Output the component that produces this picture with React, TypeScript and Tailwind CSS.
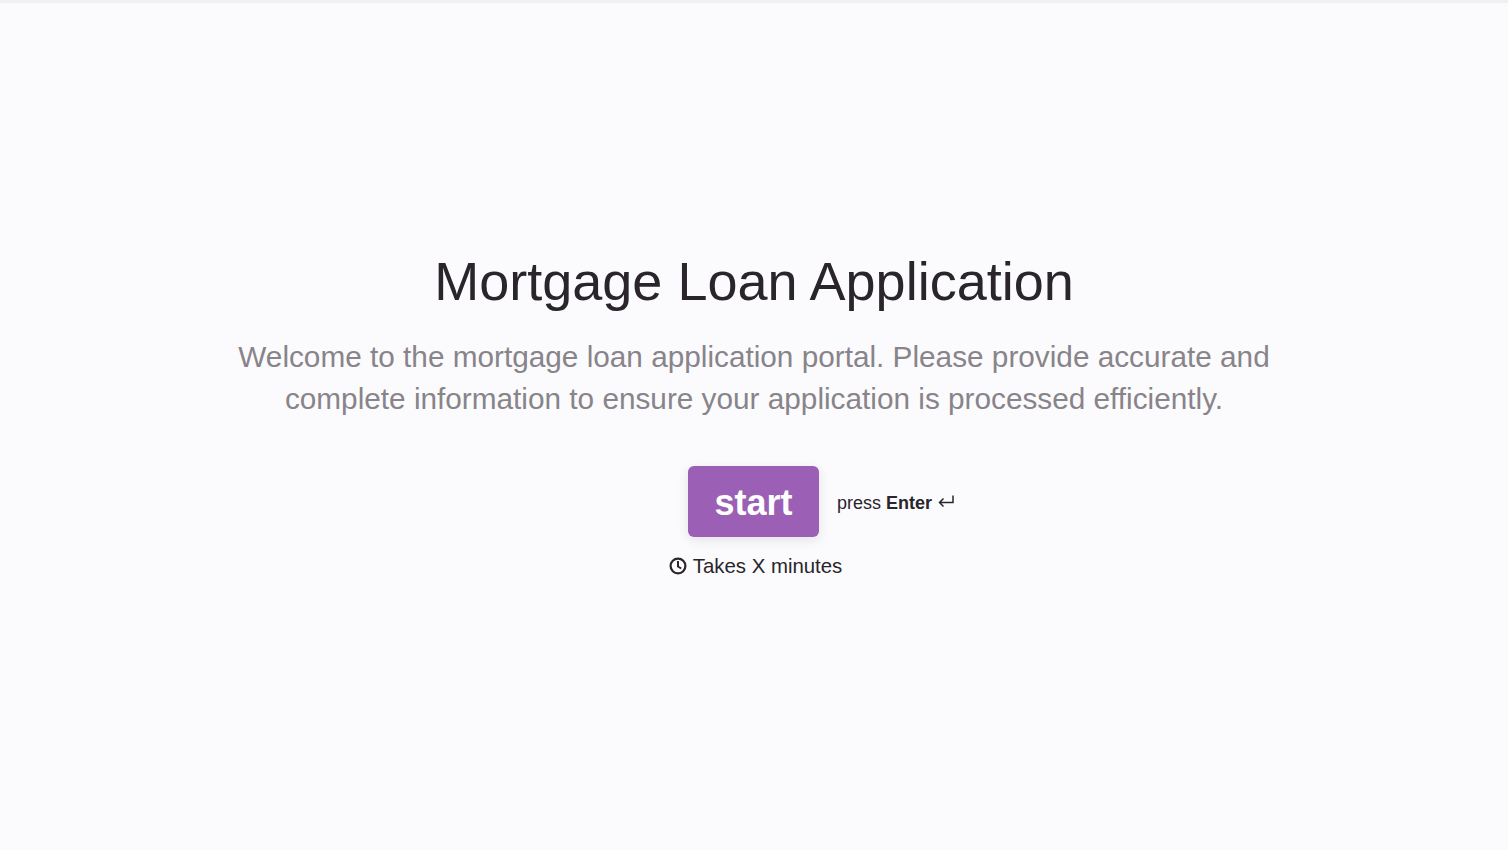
export default function App() {
  return (
    <div className="h-[850px] bg-[#fbfbfd] border-t-[3px] border-[#f0f0f3] flex flex-col items-center justify-center font-['Liberation_Sans',Arial,sans-serif] pb-[25px]">
      <h1 className="text-[#29252b] text-[54px] leading-[64px] font-normal text-center">Mortgage Loan Application</h1>
      <p className="mt-[23px] text-[#88848a] text-[29.75px] leading-[42px] text-center w-[1100px]">
        Welcome to the mortgage loan application portal. Please provide accurate and complete information to ensure your application is processed efficiently.
      </p>
      <div className="relative mt-[46px] mr-[1px] flex">
        <button className="w-[131px] h-[71px] pt-[2px] rounded-[6px] bg-[#9b5fb5] text-white text-[36px] font-bold shadow-[0_3px_12px_rgba(0,0,0,0.1)]">start</button>
        <div className="absolute left-[149px] top-[25px] whitespace-nowrap flex items-center text-[18px] leading-[24px] text-[#29252b]">
          <span>press <b>Enter</b></span>
          <svg className="ml-[6px] mb-[4px]" width="16" height="13" viewBox="0 0 16 13" fill="none" stroke="#29252b" strokeWidth="1.5"><path d="M15 0.5v7H1.5M5.5 3.5 1.5 7.5l4 4" /></svg>
        </div>
      </div>
      <div className="mt-[16px] ml-[3px] flex items-center text-[#29252b] text-[20.4px] leading-[26px]">
        <svg className="mr-[6px]" width="18" height="18" viewBox="0 0 18 18" fill="none" stroke="#29252b" strokeWidth="2.2"><circle cx="9" cy="9" r="7.4" /><path d="M9 4v5.5l3.2 2" strokeWidth="2" /></svg>
        Takes X minutes
      </div>
    </div>
  );
}
